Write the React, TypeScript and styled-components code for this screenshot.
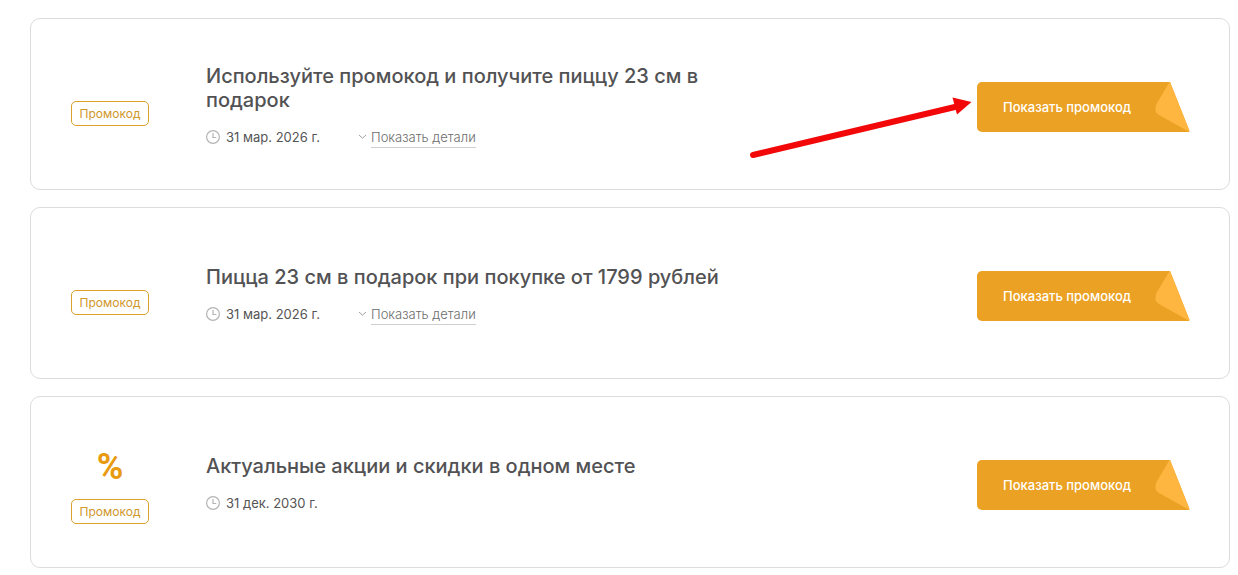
import React from "react";
import styled, { createGlobalStyle } from "styled-components";

const GlobalStyle = createGlobalStyle`
  *, *::before, *::after { box-sizing: border-box; }
  body {
    margin: 0;
    background: #ffffff;
    color: #4d4d4d;
    font-family: Inter, "Liberation Sans", sans-serif;
  }
`;

const List = styled.main`
  display: flex;
  flex-direction: column;
  gap: 17px;
  padding: 18px 8px 7px 30px;
`;

const Card = styled.article`
  display: flex;
  align-items: center;
  min-height: 172px;
  padding: 40px 39px 40px 40px;
  border: 1px solid #dcdcdc;
  border-radius: 10px;
`;

const Kind = styled.div`
  display: flex;
  flex-direction: column;
  align-items: center;
  gap: 5px;
  flex: none;
  width: 78px;
  margin-right: 57px;
`;

const Discount = styled.div<{ $filled?: boolean }>`
  display: flex;
  align-items: center;
  justify-content: center;
  height: ${({ $filled }) => ($filled ? 54 : 14)}px;
  color: #e89b12;
  font-family: Roboto, sans-serif;
  font-size: 36px;
  font-weight: 700;
`;

const Badge = styled.span`
  width: 100%;
  border: 1px solid #dba12d;
  border-radius: 5px;
  color: #d0972b;
  font-size: 12px;
  line-height: 23px;
  text-align: center;
`;

const Info = styled.div`
  display: flex;
  flex-direction: column;
  gap: 15px;
  width: 540px;
  padding-top: 3px;
`;

const Title = styled.h2`
  margin: 0;
  color: #525254;
  font-size: 20px;
  font-weight: 500;
  line-height: 24px;
`;

const Meta = styled.div`
  display: flex;
  align-items: center;
  gap: 38px;
  font-size: 13px;
  line-height: 20px;
`;

const Expiry = styled.span`
  display: flex;
  align-items: center;
  gap: 5px;
  color: #555555;
`;

const Details = styled.a`
  display: flex;
  align-items: center;
  gap: 4px;
  color: #6c6c6c;
  font-weight: 300;
  text-decoration: none;

  span {
    border-bottom: 1px solid #cfcfcf;
  }
`;

const Action = styled.div`
  position: relative;
  flex: none;
  margin-left: auto;
  padding-top: 6px;
`;

const CodeButton = styled.button`
  display: flex;
  align-items: center;
  justify-content: space-between;
  width: 213px;
  height: 50px;
  padding: 0 0 0 26px;
  border: 0;
  border-radius: 5px 0 0 5px;
  background: linear-gradient(#eba123, #eba123) left / calc(100% - 36px) 100% no-repeat;
  color: #ffffff;
  font-family: inherit;
  font-size: 13px;
  font-weight: 500;
  cursor: pointer;
`;

const Pointer = styled.svg`
  position: absolute;
  top: 16px;
  right: 100%;
  pointer-events: none;
`;

const ClockIcon = () => (
  <svg width="15" height="15" viewBox="0 0 15 15" fill="none" stroke="#b4b4b4" aria-hidden="true">
    <circle cx="7" cy="7" r="6.4" strokeWidth="1.2" />
    <path d="M7 3V7.500h3.300" strokeWidth="1.2" />
  </svg>
);

const ChevronIcon = () => (
  <svg width="9" height="6" viewBox="0 0 9 6" fill="none" stroke="#a0a0a0" aria-hidden="true">
    <path d="M1 1l3.500 3.200L8 1" />
  </svg>
);

const FoldedCorner = () => (
  <svg width="37" height="50" viewBox="0 0 37 50" aria-hidden="true">
    <path d="M0 0H17L36.500 49Q36.500 50 35.500 50H0Z" fill="#eba123" />
    <path d="M16.500 0L3.500 22Q2 25 2.500 29Q3 31 6 33L35.500 49.500L36.500 49L17 0Z" fill="#ffb640" />
  </svg>
);

const Arrow = () => (
  <Pointer width="230" height="70" viewBox="0 0 230 70" aria-hidden="true">
    <path d="M6 63L210 14.500" stroke="#f20808" strokeWidth="6" strokeLinecap="round" />
    <path d="M205.500 5.500L224.500 10L210 22.500Z" fill="#f20808" />
  </Pointer>
);

interface Offer {
  title: string;
  expires: string;
  details?: boolean;
  discount?: boolean;
  highlighted?: boolean;
}

const offers: Offer[] = [
  {
    title: "Используйте промокод и получите пиццу 23 см в подарок",
    expires: "31 мар. 2026 г.",
    details: true,
    highlighted: true,
  },
  {
    title: "Пицца 23 см в подарок при покупке от 1799 рублей",
    expires: "31 мар. 2026 г.",
    details: true,
  },
  {
    title: "Актуальные акции и скидки в одном месте",
    expires: "31 дек. 2030 г.",
    discount: true,
  },
];

const OfferCard = ({ offer }: { offer: Offer }) => (
  <Card>
    <Kind>
      <Discount $filled={offer.discount}>{offer.discount && "%"}</Discount>
      <Badge>Промокод</Badge>
    </Kind>
    <Info>
      <Title>{offer.title}</Title>
      <Meta>
        <Expiry>
          <ClockIcon />
          {offer.expires}
        </Expiry>
        {offer.details && (
          <Details href="#details">
            <ChevronIcon />
            <span>Показать детали</span>
          </Details>
        )}
      </Meta>
    </Info>
    <Action>
      <CodeButton type="button">
        Показать промокод
        <FoldedCorner />
      </CodeButton>
      {offer.highlighted && <Arrow />}
    </Action>
  </Card>
);

export default function App() {
  return (
    <>
      <GlobalStyle />
      <List>
        {offers.map((offer) => (
          <OfferCard key={offer.title} offer={offer} />
        ))}
      </List>
    </>
  );
}
